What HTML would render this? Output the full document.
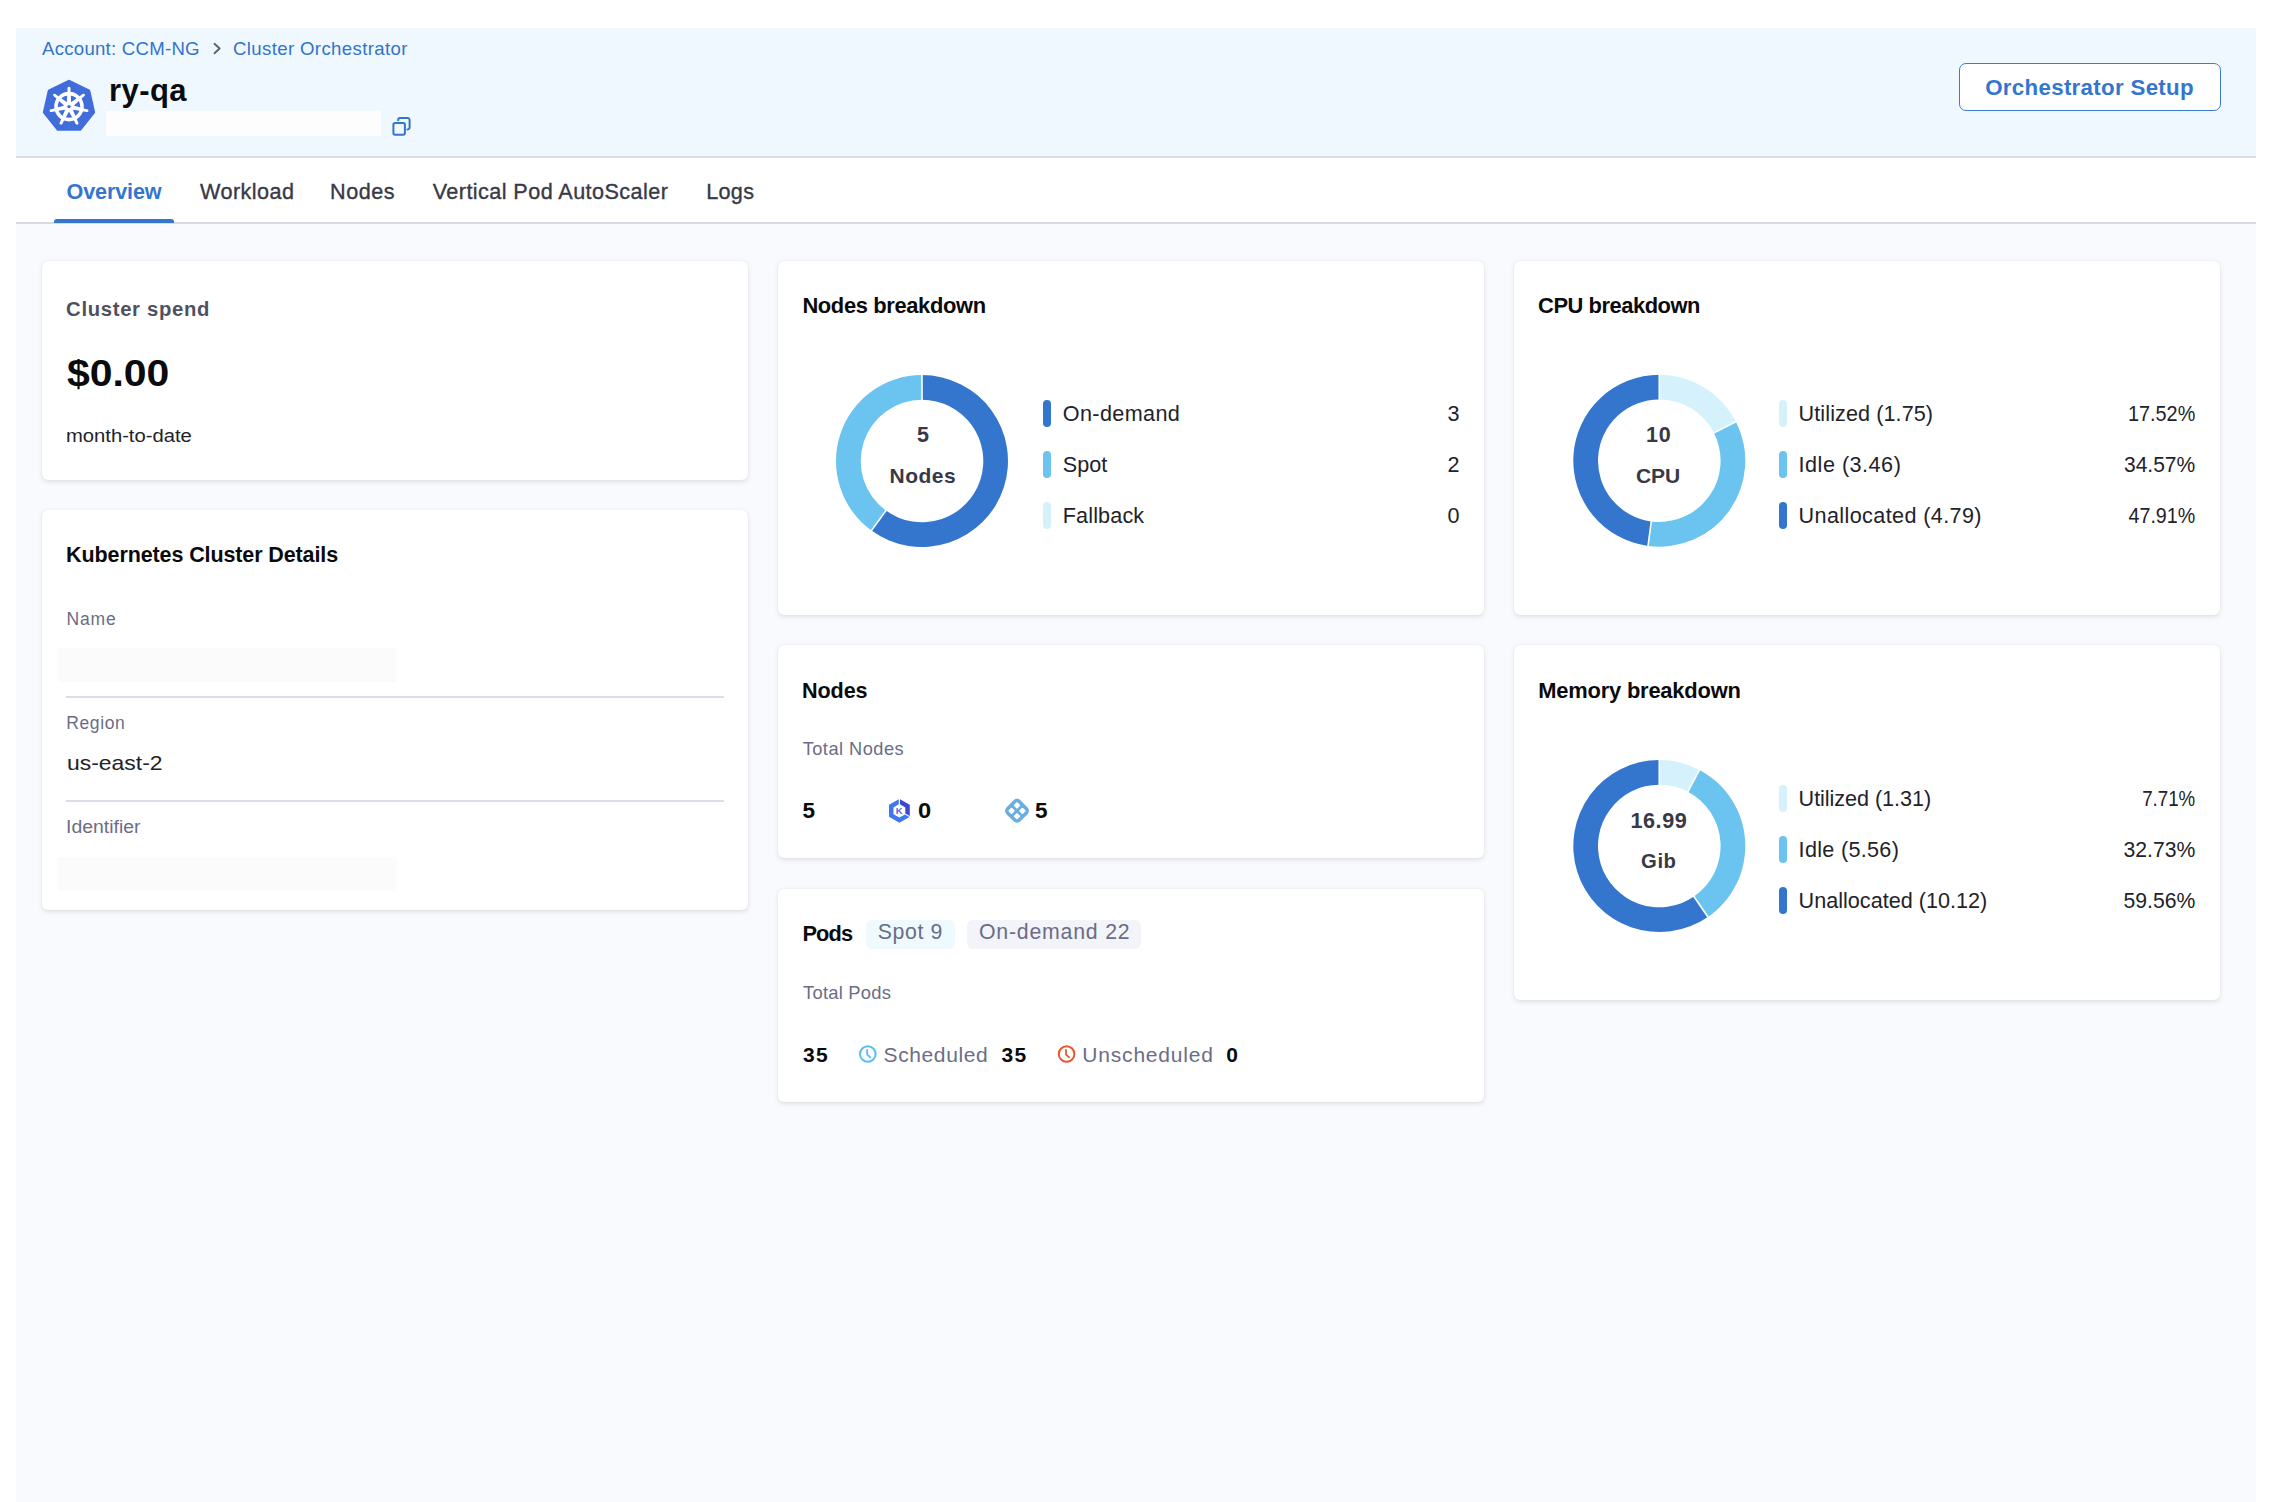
<!DOCTYPE html>
<html><head><meta charset="utf-8"><title>ry-qa</title>
<style>
html,body{margin:0;padding:0;}
body{width:2278px;height:1502px;position:relative;overflow:hidden;background:#ffffff;font-family:"Liberation Sans",sans-serif;}
.t{position:absolute;white-space:nowrap;line-height:1;}
.hdr{position:absolute;left:16px;top:28px;width:2240px;height:129px;background:#eff8fe;}
.hline{position:absolute;left:16px;top:156.2px;width:2240px;height:1.7px;background:#dadbe4;}
.tabs{position:absolute;left:16px;top:157.9px;width:2240px;height:64.6px;background:#ffffff;}
.tline{position:absolute;left:16px;top:222px;width:2240px;height:1.5px;background:#d9dae5;}
.content{position:absolute;left:16px;top:223.5px;width:2240px;height:1280px;background:#f9fafd;}
.ul{position:absolute;left:54px;top:219px;width:120px;height:4px;background:#3476ce;border-radius:3px 3px 0 0;}
.card{position:absolute;background:#fff;border-radius:6px;box-shadow:0 0 1px rgba(40,41,61,0.08),0 1.5px 4px rgba(96,97,112,0.16);}
.bar{position:absolute;width:8px;height:27px;border-radius:4px;}
.btn{position:absolute;box-sizing:border-box;left:1959px;top:63px;width:262px;height:48px;border:1.8px solid #3b7bd6;border-radius:7px;background:#fff;}
.wbar{position:absolute;left:106px;top:111px;width:275px;height:25px;background:#fdfdfd;}
.gbox{position:absolute;left:58px;width:339px;height:34px;background:#fbfbfb;}
.div{position:absolute;left:66px;width:658px;height:1.5px;background:#dcdde6;}
.pill{position:absolute;top:919.5px;height:29px;border-radius:6px;}
svg{position:absolute;left:0;top:0;}
</style></head><body>
<div class="hdr"></div>
<div class="hline"></div>
<div class="tabs"></div>
<div class="tline"></div>
<div class="ul"></div>
<div class="content"></div>
<div class="btn"></div>
<div class="wbar"></div>

<div class="card" style="left:42px;top:261px;width:706px;height:219px"></div>
<div class="card" style="left:42px;top:510px;width:706px;height:400px"></div>
<div class="card" style="left:778px;top:261px;width:706px;height:354px"></div>
<div class="card" style="left:778px;top:645px;width:706px;height:213px"></div>
<div class="card" style="left:778px;top:889px;width:706px;height:213px"></div>
<div class="card" style="left:1514px;top:261px;width:706px;height:354px"></div>
<div class="card" style="left:1514px;top:645px;width:706px;height:355px"></div>

<div class="gbox" style="top:648px"></div>
<div class="div" style="top:696px"></div>
<div class="div" style="top:800px"></div>
<div class="gbox" style="top:857px"></div>

<div class="pill" style="left:866px;width:89px;background:#effaff"></div>
<div class="pill" style="left:967px;width:174px;background:#f3f3fa"></div>

<div class="bar" style="left:1043px;top:400px;background:#3476ce"></div><div class="bar" style="left:1043px;top:451px;background:#6bc3f0"></div><div class="bar" style="left:1043px;top:502px;background:#d5f2fc"></div><div class="bar" style="left:1779px;top:400px;background:#d5f2fc"></div><div class="bar" style="left:1779px;top:785px;background:#d5f2fc"></div><div class="bar" style="left:1779px;top:451px;background:#6bc3f0"></div><div class="bar" style="left:1779px;top:836px;background:#6bc3f0"></div><div class="bar" style="left:1779px;top:502px;background:#3476ce"></div><div class="bar" style="left:1779px;top:887px;background:#3476ce"></div>

<svg width="2278" height="1502" viewBox="0 0 2278 1502">
<path d="M922.00,375.00 A86.0,86.0 0 1 1 871.45,530.58 L885.97,510.59 A61.3,61.3 0 1 0 922.00,399.70 Z" fill="#3476ce"/>
<path d="M871.45,530.58 A86.0,86.0 0 0 1 922.00,375.00 L922.00,399.70 A61.3,61.3 0 0 0 885.97,510.59 Z" fill="#6bc3f0"/>
<line x1="922.00" y1="400.70" x2="922.00" y2="374.00" stroke="#fff" stroke-width="1.6"/>
<line x1="886.56" y1="509.78" x2="870.86" y2="531.38" stroke="#fff" stroke-width="1.6"/><path d="M1659.30,374.70 A86.0,86.0 0 0 1 1735.98,421.75 L1713.95,432.94 A61.3,61.3 0 0 0 1659.30,399.40 Z" fill="#d5f2fc"/>
<path d="M1735.98,421.75 A86.0,86.0 0 0 1 1648.04,545.96 L1651.27,521.47 A61.3,61.3 0 0 0 1713.95,432.94 Z" fill="#6bc3f0"/>
<path d="M1648.04,545.96 A86.0,86.0 0 0 1 1659.30,374.70 L1659.30,399.40 A61.3,61.3 0 0 0 1651.27,521.47 Z" fill="#3476ce"/>
<line x1="1659.30" y1="400.40" x2="1659.30" y2="373.70" stroke="#fff" stroke-width="1.6"/>
<line x1="1713.06" y1="433.39" x2="1736.87" y2="421.30" stroke="#fff" stroke-width="1.6"/>
<line x1="1651.40" y1="520.48" x2="1647.91" y2="546.95" stroke="#fff" stroke-width="1.6"/><path d="M1659.30,760.00 A86.0,86.0 0 0 1 1699.35,769.90 L1687.85,791.75 A61.3,61.3 0 0 0 1659.30,784.70 Z" fill="#d5f2fc"/>
<path d="M1699.35,769.90 A86.0,86.0 0 0 1 1707.91,916.95 L1693.95,896.57 A61.3,61.3 0 0 0 1687.85,791.75 Z" fill="#6bc3f0"/>
<path d="M1707.91,916.95 A86.0,86.0 0 1 1 1659.30,760.00 L1659.30,784.70 A61.3,61.3 0 1 0 1693.95,896.57 Z" fill="#3476ce"/>
<line x1="1659.30" y1="785.70" x2="1659.30" y2="759.00" stroke="#fff" stroke-width="1.6"/>
<line x1="1687.38" y1="792.64" x2="1699.82" y2="769.01" stroke="#fff" stroke-width="1.6"/>
<line x1="1693.38" y1="895.74" x2="1708.47" y2="917.77" stroke="#fff" stroke-width="1.6"/>
<polygon points="69.00,81.60 88.55,91.01 93.37,112.16 79.85,129.12 58.15,129.12 44.63,112.16 49.45,91.01" fill="#416ddb" stroke="#416ddb" stroke-width="3.5" stroke-linejoin="round"/><circle cx="69.0" cy="106.6" r="13.0" fill="none" stroke="#fff" stroke-width="3.6"/><polygon points="71.20,103.10 70.35,88.00 67.65,88.00 66.80,103.10" fill="#fff"/><circle cx="69.00" cy="88.00" r="1.35" fill="#fff"/><polygon points="73.11,106.14 84.38,96.06 82.70,93.95 70.36,102.70" fill="#fff"/><circle cx="83.54" cy="95.00" r="1.35" fill="#fff"/><polygon points="71.92,109.52 86.83,112.06 87.43,109.42 72.90,105.23" fill="#fff"/><circle cx="87.13" cy="110.74" r="1.35" fill="#fff"/><polygon points="68.54,110.71 75.85,123.94 78.29,122.77 72.50,108.80" fill="#fff"/><circle cx="77.07" cy="123.36" r="1.35" fill="#fff"/><polygon points="65.50,108.80 59.71,122.77 62.15,123.94 69.46,110.71" fill="#fff"/><circle cx="60.93" cy="123.36" r="1.35" fill="#fff"/><polygon points="65.10,105.23 50.57,109.42 51.17,112.06 66.08,109.52" fill="#fff"/><circle cx="50.87" cy="110.74" r="1.35" fill="#fff"/><polygon points="67.64,102.70 55.30,93.95 53.62,96.06 64.89,106.14" fill="#fff"/><circle cx="54.46" cy="95.00" r="1.35" fill="#fff"/><circle cx="69.0" cy="106.6" r="5.0" fill="#fff"/><circle cx="69.0" cy="106.6" r="1.7" fill="#416ddb"/>
<!-- breadcrumb chevron -->
<path d="M214.5,43.8 L219.6,48.5 L214.5,53.2" fill="none" stroke="#5e6170" stroke-width="1.9" stroke-linecap="round" stroke-linejoin="round"/>
<!-- copy icon -->
<rect x="393.4" y="123" width="11.5" height="11.8" rx="1.8" fill="none" stroke="#3476ce" stroke-width="2"/>
<path d="M398.2,120.2 V119.9 a1.8,1.8 0 0 1 1.8,-1.8 H407.8 a1.8,1.8 0 0 1 1.8,1.8 V127.6 a1.8,1.8 0 0 1 -1.8,1.8 H407.4" fill="none" stroke="#3476ce" stroke-width="2" stroke-linecap="round"/>
<!-- K hexagon icon -->
<g transform="translate(899.4,810.8)">
 <path d="M-0.6,-11.65 L-10.39,-6 L-10.39,6 L0,12 L10.05,6.2 L5.6,3.6 L0,6.8 L-5.89,3.4 L-5.89,-3.4 L-0.6,-6.45 Z" fill="#3d78ef"/>
 <path d="M0.6,-11.65 L10.39,-6 L10.39,5.3 L5.89,2.8 L5.89,-3.4 L0.6,-6.45 Z" fill="#3f48d6"/>
 <text x="-0.1" y="3.5" font-family="Liberation Sans" font-size="9.5" font-weight="700" fill="#5566da" text-anchor="middle">K</text>
</g>
<!-- diamond icon -->
<g transform="translate(1017,810.8) rotate(45) scale(1.15)">
 <rect x="-8.6" y="-8.6" width="17.2" height="17.2" rx="4.2" fill="#6aaee0"/>
 <rect x="-5.5" y="-5.5" width="4.3" height="4.3" rx="0.8" fill="#fff"/>
 <rect x="1.2" y="-5.5" width="4.3" height="4.3" rx="0.8" fill="#fff"/>
 <rect x="-5.5" y="1.2" width="4.3" height="4.3" rx="0.8" fill="#fff"/>
 <rect x="1.2" y="1.2" width="4.3" height="4.3" rx="0.8" fill="#fff"/>
</g>
<!-- clocks -->
<g transform="translate(867.8,1054)">
 <circle r="7.8" fill="none" stroke="#5bbdf0" stroke-width="2"/>
 <path d="M-0.6,-4.2 V0.6 L2.6,3.4" fill="none" stroke="#5bbdf0" stroke-width="1.8" stroke-linecap="round" stroke-linejoin="round"/>
</g>
<g transform="translate(1066.6,1054)">
 <circle r="7.8" fill="none" stroke="#e8582c" stroke-width="2"/>
 <path d="M-0.6,-4.2 V0.6 L2.6,3.4" fill="none" stroke="#e8582c" stroke-width="1.8" stroke-linecap="round" stroke-linejoin="round"/>
</g>
</svg>
<div class="t" style="left:42.00px;top:39.96px;font-size:18.6px;font-weight:400;color:#3273cc;letter-spacing:0.26px;">Account: CCM-NG</div><div class="t" style="left:233.00px;top:39.96px;font-size:18.6px;font-weight:400;color:#3273cc;letter-spacing:0.37px;">Cluster Orchestrator</div><div class="t" style="left:109.00px;top:74.86px;font-size:31px;font-weight:700;color:#0b0b0d;letter-spacing:0.45px;">ry-qa</div><div class="t" style="left:66.50px;top:180.82px;font-size:21.6px;font-weight:700;color:#3476ce;letter-spacing:-0.13px;">Overview</div><div class="t" style="left:200.00px;top:180.82px;font-size:21.6px;font-weight:400;color:#383946;letter-spacing:0.44px;-webkit-text-stroke:0.35px #383946;">Workload</div><div class="t" style="left:330.00px;top:180.82px;font-size:21.6px;font-weight:400;color:#383946;letter-spacing:0.54px;-webkit-text-stroke:0.35px #383946;">Nodes</div><div class="t" style="left:432.70px;top:180.82px;font-size:21.6px;font-weight:400;color:#383946;letter-spacing:0.43px;-webkit-text-stroke:0.35px #383946;">Vertical Pod AutoScaler</div><div class="t" style="left:706.20px;top:180.82px;font-size:21.6px;font-weight:400;color:#383946;letter-spacing:0.32px;-webkit-text-stroke:0.35px #383946;">Logs</div><div class="t" style="left:1985.20px;top:76.62px;font-size:22.3px;font-weight:700;color:#3476ce;letter-spacing:0.31px;">Orchestrator Setup</div><div class="t" style="left:66.10px;top:299.02px;font-size:20.3px;font-weight:700;color:#4f5162;letter-spacing:0.67px;">Cluster spend</div><div class="t" style="left:66.70px;top:355.53px;font-size:36.7px;font-weight:700;color:#0b0b0d;transform:scaleX(1.115);transform-origin:0 0;">$0.00</div><div class="t" style="left:66.30px;top:427.11px;font-size:18.3px;font-weight:400;color:#22222a;transform:scaleX(1.105);transform-origin:0 0;">month-to-date</div><div class="t" style="left:66.10px;top:545.00px;font-size:21.5px;font-weight:700;color:#0b0b0d;letter-spacing:-0.11px;">Kubernetes Cluster Details</div><div class="t" style="left:66.50px;top:611.29px;font-size:17.5px;font-weight:400;color:#6b6d85;letter-spacing:0.85px;">Name</div><div class="t" style="left:66.20px;top:715.19px;font-size:17.5px;font-weight:400;color:#6b6d85;letter-spacing:0.64px;">Region</div><div class="t" style="left:66.50px;top:752.92px;font-size:20.3px;font-weight:400;color:#22222a;transform:scaleX(1.13);transform-origin:0 0;">us-east-2</div><div class="t" style="left:66.30px;top:818.69px;font-size:17.5px;font-weight:400;color:#6b6d85;transform:scaleX(1.11);transform-origin:0 0;">Identifier</div><div class="t" style="left:802.40px;top:294.86px;font-size:21.9px;font-weight:700;color:#0b0b0d;letter-spacing:-0.35px;">Nodes breakdown</div><div class="t" style="left:917.00px;top:424.50px;font-size:21.5px;font-weight:700;color:#383946;">5</div><div class="t" style="left:889.60px;top:465.32px;font-size:21.0px;font-weight:700;color:#383946;letter-spacing:0.45px;">Nodes</div><div class="t" style="left:1062.80px;top:403.22px;font-size:21.6px;font-weight:400;color:#22222a;letter-spacing:0.37px;">On-demand</div><div class="t" style="right:818.50px;top:403.22px;font-size:21.6px;font-weight:400;color:#22222a;">3</div><div class="t" style="left:1062.80px;top:454.22px;font-size:21.6px;font-weight:400;color:#22222a;letter-spacing:0.03px;">Spot</div><div class="t" style="right:818.50px;top:454.22px;font-size:21.6px;font-weight:400;color:#22222a;">2</div><div class="t" style="left:1062.80px;top:505.22px;font-size:21.6px;font-weight:400;color:#22222a;letter-spacing:0.13px;">Fallback</div><div class="t" style="right:818.50px;top:505.22px;font-size:21.6px;font-weight:400;color:#22222a;">0</div><div class="t" style="left:1538.10px;top:294.86px;font-size:21.9px;font-weight:700;color:#0b0b0d;letter-spacing:-0.46px;">CPU breakdown</div><div class="t" style="left:1646.00px;top:424.90px;font-size:21.5px;font-weight:700;color:#383946;letter-spacing:0.90px;">10</div><div class="t" style="left:1635.90px;top:465.32px;font-size:21.0px;font-weight:700;color:#383946;">CPU</div><div class="t" style="left:1798.60px;top:403.22px;font-size:21.6px;font-weight:400;color:#22222a;letter-spacing:0.09px;">Utilized (1.75)</div><div class="t" style="right:82.70px;top:403.22px;font-size:21.6px;font-weight:400;color:#22222a;transform:scaleX(0.917);transform-origin:100% 0;">17.52%</div><div class="t" style="left:1798.60px;top:454.22px;font-size:21.6px;font-weight:400;color:#22222a;letter-spacing:0.50px;">Idle (3.46)</div><div class="t" style="right:82.70px;top:454.22px;font-size:21.6px;font-weight:400;color:#22222a;transform:scaleX(0.973);transform-origin:100% 0;">34.57%</div><div class="t" style="left:1798.60px;top:505.22px;font-size:21.6px;font-weight:400;color:#22222a;letter-spacing:0.38px;">Unallocated (4.79)</div><div class="t" style="right:82.70px;top:505.22px;font-size:21.6px;font-weight:400;color:#22222a;transform:scaleX(0.911);transform-origin:100% 0;">47.91%</div><div class="t" style="left:802.00px;top:680.12px;font-size:21.6px;font-weight:700;color:#0b0b0d;letter-spacing:-0.10px;">Nodes</div><div class="t" style="left:802.70px;top:739.79px;font-size:18.2px;font-weight:400;color:#6b6d85;letter-spacing:0.49px;">Total Nodes</div><div class="t" style="left:802.60px;top:799.95px;font-size:22.5px;font-weight:700;color:#0b0b0d;">5</div><div class="t" style="left:918.20px;top:799.95px;font-size:22.5px;font-weight:700;color:#0b0b0d;transform:scaleX(1.05);transform-origin:0 0;">0</div><div class="t" style="left:1034.90px;top:799.95px;font-size:22.5px;font-weight:700;color:#0b0b0d;">5</div><div class="t" style="left:802.40px;top:923.25px;font-size:21.8px;font-weight:700;color:#0b0b0d;letter-spacing:-0.86px;">Pods</div><div class="t" style="left:877.70px;top:922.07px;font-size:21.3px;font-weight:400;color:#6b6d85;letter-spacing:0.63px;">Spot 9</div><div class="t" style="left:979.00px;top:922.07px;font-size:21.3px;font-weight:400;color:#6b6d85;letter-spacing:0.78px;">On-demand 22</div><div class="t" style="left:803.10px;top:983.72px;font-size:18.4px;font-weight:400;color:#6b6d85;letter-spacing:0.22px;">Total Pods</div><div class="t" style="left:802.90px;top:1044.12px;font-size:21px;font-weight:700;color:#0b0b0d;letter-spacing:1.32px;">35</div><div class="t" style="left:883.60px;top:1044.12px;font-size:21px;font-weight:400;color:#6b6d85;letter-spacing:0.60px;">Scheduled</div><div class="t" style="left:1001.60px;top:1044.12px;font-size:21px;font-weight:700;color:#0b0b0d;letter-spacing:1.32px;">35</div><div class="t" style="left:1082.30px;top:1044.12px;font-size:21px;font-weight:400;color:#6b6d85;letter-spacing:0.81px;">Unscheduled</div><div class="t" style="left:1226.30px;top:1044.12px;font-size:21px;font-weight:700;color:#0b0b0d;">0</div><div class="t" style="left:1538.20px;top:680.26px;font-size:21.9px;font-weight:700;color:#0b0b0d;letter-spacing:-0.19px;">Memory breakdown</div><div class="t" style="left:1630.40px;top:809.82px;font-size:21.6px;font-weight:700;color:#383946;letter-spacing:0.60px;">16.99</div><div class="t" style="left:1641.10px;top:850.52px;font-size:20.3px;font-weight:700;color:#383946;letter-spacing:0.54px;">Gib</div><div class="t" style="left:1798.60px;top:788.22px;font-size:21.6px;font-weight:400;color:#22222a;letter-spacing:-0.05px;">Utilized (1.31)</div><div class="t" style="right:82.70px;top:788.22px;font-size:21.6px;font-weight:400;color:#22222a;transform:scaleX(0.867);transform-origin:100% 0;">7.71%</div><div class="t" style="left:1798.60px;top:839.22px;font-size:21.6px;font-weight:400;color:#22222a;letter-spacing:0.30px;">Idle (5.56)</div><div class="t" style="right:82.70px;top:839.22px;font-size:21.6px;font-weight:400;color:#22222a;transform:scaleX(0.98);transform-origin:100% 0;">32.73%</div><div class="t" style="left:1798.60px;top:890.22px;font-size:21.6px;font-weight:400;color:#22222a;letter-spacing:0.01px;">Unallocated (10.12)</div><div class="t" style="right:82.70px;top:890.22px;font-size:21.6px;font-weight:400;color:#22222a;transform:scaleX(0.98);transform-origin:100% 0;">59.56%</div>
</body></html>
